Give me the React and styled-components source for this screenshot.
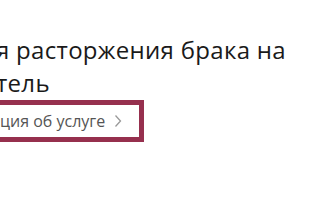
import React from "react";
import styled, { createGlobalStyle } from "styled-components";

const GlobalStyle = createGlobalStyle`
  html, body {
    margin: 0;
    padding: 0;
    background: #fff;
    overflow: hidden;
  }
  body {
    font-family: "Open Sans", "Noto Sans", sans-serif;
  }
`;

const Page = styled.div`
  display: flex;
  flex-direction: column;
  align-items: flex-start;
  margin-left: -20px;
  padding-top: 33px;
`;

const Title = styled.h1`
  margin: 0 0 0 16px;
  font-size: 24px;
  line-height: 33px;
  letter-spacing: 0.3px;
  font-weight: 400;
  color: #1a1a1a;
  white-space: nowrap;
`;

const InfoLink = styled.a`
  display: inline-flex;
  align-items: center;
  gap: 9px;
  margin-top: 1px;
  height: 32px;
  padding: 0 17px 0 15px;
  border: 5px solid #96304e;
  font-size: 16px;
  color: #555;
  text-decoration: none;
  cursor: pointer;
`;

const Chevron = () => (
  <svg width="8" height="14" viewBox="0 0 8 14" fill="none">
    <path d="M1.5 1.5 6.5 7 1.5 12.5" stroke="#999" strokeWidth="1.3" />
  </svg>
);

export default function App() {
  return (
    <>
      <GlobalStyle />
      <Page>
        <Title>
          я расторжения брака на
          <br />
          тель
        </Title>
        <InfoLink>
          ция об услуге
          <Chevron />
        </InfoLink>
      </Page>
    </>
  );
}
